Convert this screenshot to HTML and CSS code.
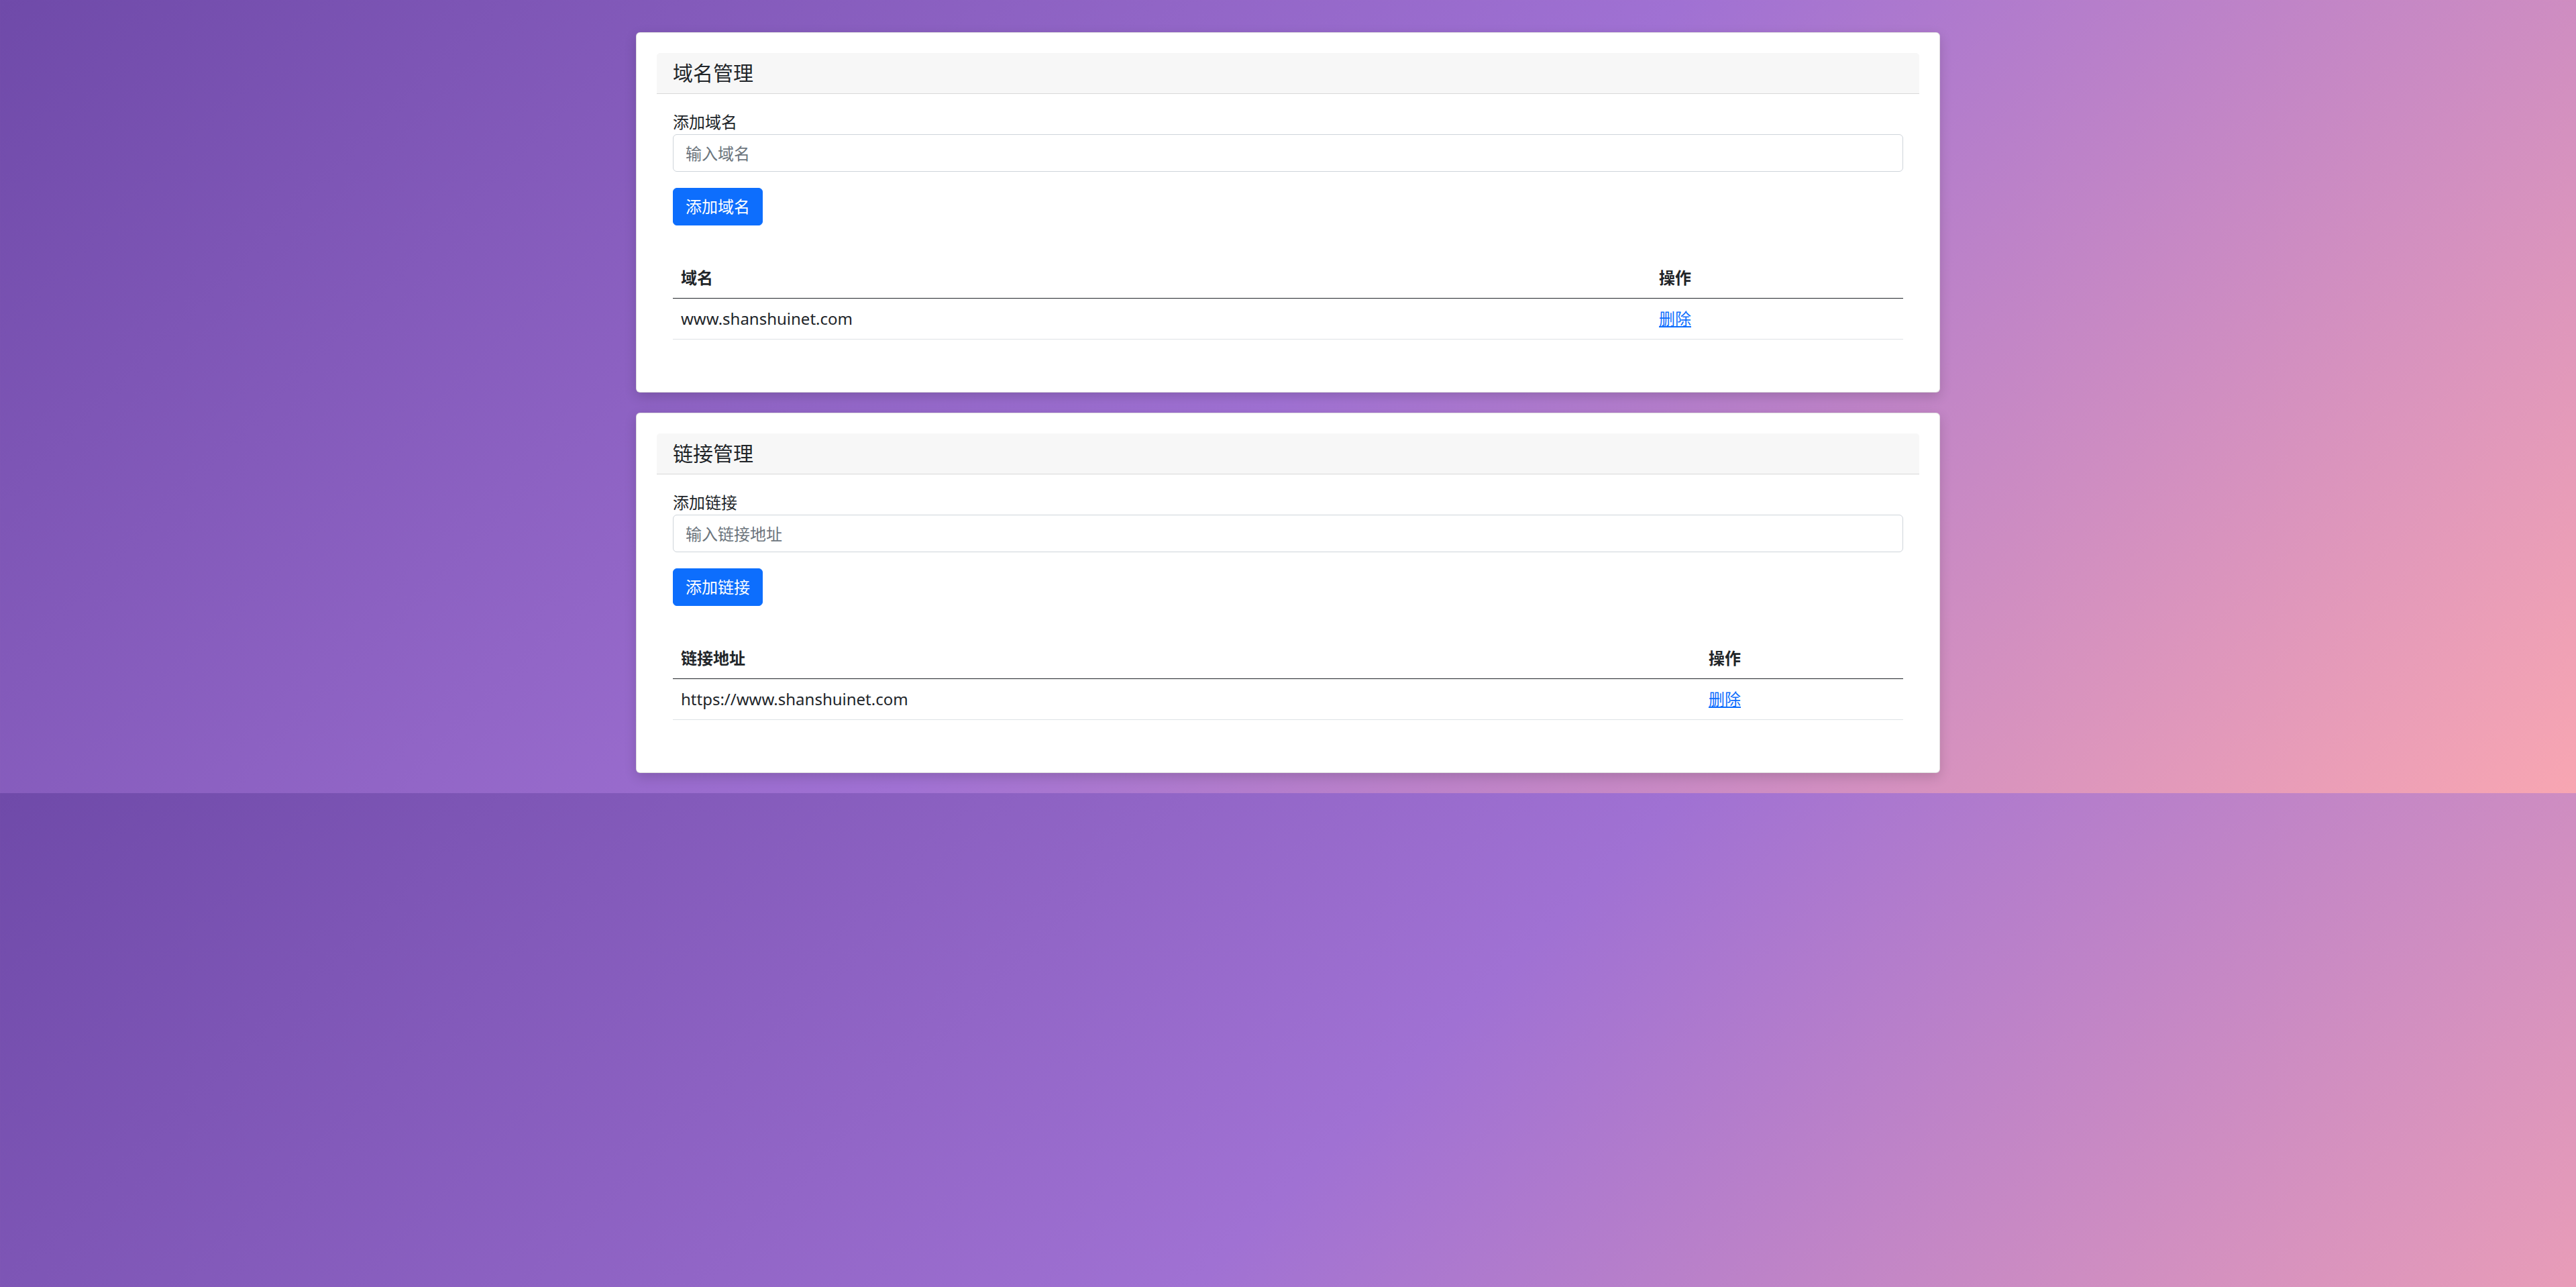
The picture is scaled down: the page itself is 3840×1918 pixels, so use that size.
FILE: index.html
```html
<!DOCTYPE html>
<html lang="zh-CN">
<head>
<meta charset="utf-8">
<title>域名与链接管理</title>
<link rel="stylesheet" href="styles.css">
</head>
<body>
<div class="container">
  <section class="card">
    <div class="card-header">域名管理</div>
    <div class="card-body">
      <label class="form-label" for="domain">添加域名</label>
      <input class="form-control" id="domain" type="text" placeholder="输入域名">
      <button class="btn" type="button">添加域名</button>
      <table class="table">
        <thead>
          <tr><th>域名</th><th class="col-action col-action-domain">操作</th></tr>
        </thead>
        <tbody>
          <tr><td>www.shanshuinet.com</td><td><a href="#">删除</a></td></tr>
        </tbody>
      </table>
    </div>
  </section>
  <section class="card">
    <div class="card-header">链接管理</div>
    <div class="card-body">
      <label class="form-label" for="link">添加链接</label>
      <input class="form-control" id="link" type="text" placeholder="输入链接地址">
      <button class="btn" type="button">添加链接</button>
      <table class="table">
        <thead>
          <tr><th>链接地址</th><th class="col-action col-action-link">操作</th></tr>
        </thead>
        <tbody>
          <tr><td>https://www.shanshuinet.com</td><td><a href="#">删除</a></td></tr>
        </tbody>
      </table>
    </div>
  </section>
</div>
</body>
</html>
```
FILE: styles.css
```css
body {
  margin: 0;
  padding: 48px 0 30px;
  background: linear-gradient(135deg, #6f4aa9 0%, #a071d3 50%, #f8a6b2 100%);
  font-family: "Noto Sans", "Noto Sans CJK SC", sans-serif;
  font-size: 24px;
  line-height: 1.5;
  color: #212529;
}

.container {
  width: 1944px;
  margin: 0 auto;
  display: flex;
  flex-direction: column;
  gap: 30px;
}

.card {
  background: #fff;
  border: 1px solid rgba(0, 0, 0, 0.125);
  border-radius: 6px;
  padding: 30px;
  box-shadow: 0 6px 18px rgba(0, 0, 0, 0.15);
}

.card-header {
  background: #f7f7f7;
  border-bottom: 1px solid rgba(0, 0, 0, 0.125);
  border-radius: 5px 5px 0 0;
  padding: 12px 24px;
  font-size: 30px;
  line-height: 36px;
  font-weight: 400;
}

.card-body {
  padding: 24px;
}

.form-label {
  display: block;
  line-height: 36px;
}

.form-control {
  display: block;
  box-sizing: border-box;
  width: 100%;
  height: 56px;
  margin: 0 0 24px;
  padding: 9px 18px;
  border: 1px solid #ced4da;
  border-radius: 6px;
  font: inherit;
  line-height: 36px;
  color: #212529;
  background: #fff;
}

.form-control::placeholder {
  color: #6c757d;
}

.btn {
  display: block;
  box-sizing: border-box;
  height: 56px;
  margin: 0;
  padding: 9px 18px;
  border: 1px solid #0d6efd;
  border-radius: 6px;
  background: #0d6efd;
  color: #fff;
  font: inherit;
  line-height: 36px;
}

.table {
  width: 100%;
  margin: 48px 0 24px;
  border-collapse: collapse;
}

.table th,
.table td {
  padding: 12px;
  text-align: left;
  line-height: 36px;
}

.table th {
  font-weight: 700;
  border-bottom: 1px solid #212529;
}

.table td {
  border-bottom: 1px solid #dee2e6;
}

.col-action-domain {
  width: 352px;
}

.col-action-link {
  width: 278px;
}

.table a {
  color: #0d6efd;
  text-decoration: underline;
}
```
